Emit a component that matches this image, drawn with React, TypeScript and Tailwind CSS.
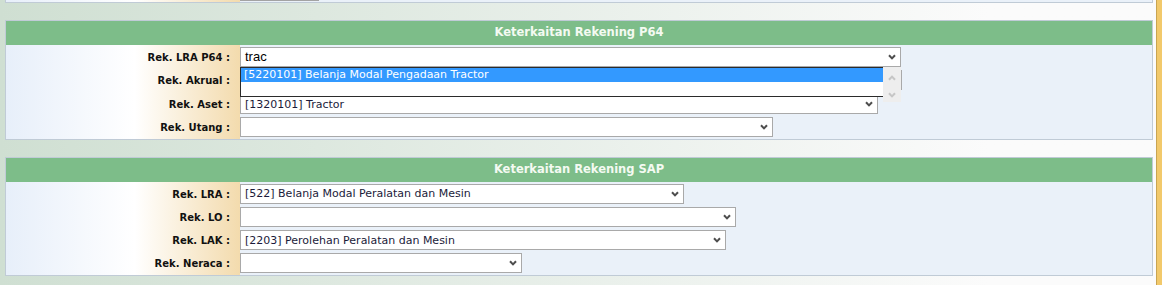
const labelBg =
  'w-[234px] shrink-0 bg-gradient-to-r from-[#e7effa] via-white via-55% to-[#f3dbad]'

function Chevron({ color = '#4d4d4d' }: { color?: string }) {
  return (
    <svg width="8" height="6" viewBox="0 0 8 6" className="shrink-0">
      <path d="M1 1.2 L4 4.4 L7 1.2" fill="none" stroke={color} strokeWidth="2" />
    </svg>
  )
}

function ChevronUp({ color }: { color: string }) {
  return (
    <svg width="8" height="6" viewBox="0 0 8 6" className="shrink-0">
      <path d="M1 4.8 L4 1.6 L7 4.8" fill="none" stroke={color} strokeWidth="2" />
    </svg>
  )
}

function Select({ width, value, input }: { width: number; value?: string; input?: boolean }) {
  return (
    <div
      className="flex h-[20px] items-center justify-between border border-[#a9a9a9] bg-white pl-[4px] pr-[4px]"
      style={{ width }}
    >
      <span
        className={
          input
            ? "font-['Liberation_Sans',sans-serif] text-[13px] text-black"
            : "pt-[2px] font-['DejaVu_Sans',sans-serif] text-[11px] text-[#1b1b3a]"
        }
      >
        {value}
      </span>
      <Chevron />
    </div>
  )
}

type Row = { label: string; width: number; value?: string; input?: boolean }

function Panel({
  title,
  rows,
  rowClass,
  children,
}: {
  title: string
  rows: Row[]
  rowClass: string
  children?: React.ReactNode
}) {
  return (
    <div className="border border-[#c0cbd6]">
      <div className="flex h-[24px] items-center justify-center bg-[#7dbd89] font-['DejaVu_Sans',sans-serif] text-[11.5px] font-bold text-[#f4faf2]">
        {title}
      </div>
      <div className="relative">
        {rows.map((r) => (
          <div key={r.label} className={`flex ${rowClass}`}>
            <div
              className={`${labelBg} flex items-center justify-end pr-[10px] pt-[1px] font-['DejaVu_Sans',sans-serif] text-[10px] font-bold text-[#111]`}
            >
              {r.label}
            </div>
            <div className="flex flex-1 items-center bg-[#eaf1f9]">
              <Select width={r.width} value={r.value} input={r.input} />
            </div>
          </div>
        ))}
        {children}
      </div>
    </div>
  )
}

export default function App() {
  return (
    <div className="flex h-[285px] w-[1162px] overflow-hidden bg-gradient-to-r from-[#cfdfd2] to-[#fbfbfb] to-85%">
      <div className="flex-1 pl-[5px] pr-[3px]">
        <div className="flex h-[3px] border-x border-b border-[#c0cbd6]">
          <div className={labelBg} />
          <div className="flex-1 bg-[#eaf1f9]">
            <div className="h-[1px] w-[79px] bg-[#a3a3a3]" />
          </div>
        </div>

        <div className="mt-[17px]">
          <Panel
            title="Keterkaitan Rekening P64"
            rowClass="h-[23.5px]"
            rows={[
              { label: 'Rek. LRA P64 :', width: 661, value: 'trac', input: true },
              { label: 'Rek. Akrual :', width: 662 },
              { label: 'Rek. Aset :', width: 638, value: '[1320101] Tractor' },
              { label: 'Rek. Utang :', width: 533 },
            ]}
          >
            <div className="absolute left-[234px] top-[22px] h-[30px] w-[661px] border border-[#2b2b2b] bg-white font-['DejaVu_Sans',sans-serif] text-[11px]">
              <div className="flex h-[14px] w-[642px] items-center bg-[#3399ff] pl-[3px] pt-[1px] text-white">
                [5220101] Belanja Modal Pengadaan Tractor
              </div>
              <div className="h-[14px]" />
              <div className="absolute right-[-1px] top-[-1px] flex h-[35px] w-[18px] flex-col items-center justify-between bg-[#eeeeee] pb-[4px] pt-[8px]">
                <ChevronUp color="#c6c6c6" />
                <Chevron color="#c6c6c6" />
              </div>
            </div>
          </Panel>
        </div>

        <div className="mt-[17px]">
          <Panel
            title="Keterkaitan Rekening SAP"
            rowClass="h-[23.25px]"
            rows={[
              { label: 'Rek. LRA :', width: 444, value: '[522] Belanja Modal Peralatan dan Mesin' },
              { label: 'Rek. LO :', width: 496 },
              { label: 'Rek. LAK :', width: 486, value: '[2203] Perolehan Peralatan dan Mesin' },
              { label: 'Rek. Neraca :', width: 282 },
            ]}
          />
        </div>
      </div>
      <div className="w-[6px] border-l border-[#c9a451] bg-[#f2c96b]" />
    </div>
  )
}
